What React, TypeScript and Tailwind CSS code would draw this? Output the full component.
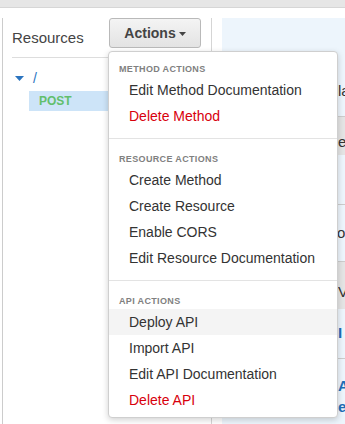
import React from 'react'

const SECTIONS = [
  {
    title: 'METHOD ACTIONS',
    items: [
      { label: 'Edit Method Documentation' },
      { label: 'Delete Method', danger: true },
    ],
  },
  {
    title: 'RESOURCE ACTIONS',
    items: [
      { label: 'Create Method' },
      { label: 'Create Resource' },
      { label: 'Enable CORS' },
      { label: 'Edit Resource Documentation' },
    ],
  },
  {
    title: 'API ACTIONS',
    items: [
      { label: 'Deploy API', active: true },
      { label: 'Import API' },
      { label: 'Edit API Documentation' },
      { label: 'Delete API', danger: true },
    ],
  },
]

function ActionsMenu() {
  return (
    <div className="absolute left-[108px] top-[51px] w-[230px] rounded-[4px] border border-[#cfcfcf] bg-white pb-[4px] pt-[9px] shadow-[0_2px_6px_rgba(0,0,0,0.18)]">
      {SECTIONS.map((section, i) => (
        <div key={section.title}>
          {i > 0 && <div className="mb-[12px] mt-[9px] h-px bg-[#e3e3e3]" />}
          <div className="h-[16px] pl-[10px] text-[9px] font-bold leading-[16px] tracking-[0.35px] text-[#808080]">
            {section.title}
          </div>
          {section.items.map((item) => (
            <div
              key={item.label}
              className={
                'h-[26px] pl-[20px] text-[14px] leading-[26px] ' +
                (item.danger ? 'text-[#d8000c] ' : 'text-[#333333] ') +
                (item.active ? 'bg-[#f4f4f4]' : '')
              }
            >
              {item.label}
            </div>
          ))}
        </div>
      ))}
    </div>
  )
}

function Sidebar() {
  return (
    <div className="w-[209px] shrink-0 border-r border-[#d5d5d5]">
      <div className="ml-[9px] mr-[10px] flex items-end justify-between border-b border-[#dddddd] pb-[9px]">
        <span className="text-[15px] leading-[20px] text-[#444444]">Resources</span>
        <button className="flex h-[30px] w-[92px] items-center justify-center gap-[3px] rounded-[3px] border border-[#b9b9b9] bg-gradient-to-b from-[#f4f4f4] to-[#e3e3e3] text-[14px] font-bold text-[#444444]">
          Actions
          <svg width="7" height="4" viewBox="0 0 7 4" className="mt-[1px]">
            <polygon points="0,0 7,0 3.5,4" fill="#444444" />
          </svg>
        </button>
      </div>
      <div className="mt-[10px] flex h-[20px] items-center pl-[12px]">
        <svg width="9" height="5" viewBox="0 0 9 5">
          <polygon points="0,0 9,0 4.5,5" fill="#2b74bf" />
        </svg>
        <span className="ml-[9px] text-[14px] text-[#2b74bf]">/</span>
      </div>
      <div className="ml-[26px] mr-[10px] mt-[3px] flex h-[20px] items-center bg-[#cde4f8] pl-[10px] text-[12px] font-bold text-[#62bf6c]">
        POST
      </div>
    </div>
  )
}

function DetailPanel() {
  return (
    <div className="ml-[10px] min-w-0 flex-1 overflow-hidden whitespace-nowrap bg-[#edf5fc] text-[15px] text-[#333333]">
      <div className="flex h-[99px] items-end border-b border-[#cccccc] pb-[14px] pl-[116px]">la</div>
      <div className="flex h-[38px] items-end bg-[#e4e4e4] pb-[2px] pl-[116px]">ea</div>
      <div className="h-[50px] border-b border-[#cccccc]" />
      <div className="flex h-[57px] items-center border-b border-[#cccccc] pl-[115px]">o|</div>
      <div className="flex h-[47px] items-end bg-[#e4e4e4] pb-[6px] pl-[116px]">VI</div>
      <div className="flex h-[50px] items-center border-b border-[#cccccc] pl-[116px] font-bold text-[#1f6fb8]">I</div>
      <div className="pl-[116px] pt-[16px] font-bold leading-[21px] text-[#1f6fb8]">
        <div>Ac</div>
        <div>e</div>
      </div>
    </div>
  )
}

export default function App() {
  return (
    <div className="relative h-[424px] w-[345px] overflow-hidden bg-white font-['Liberation_Sans',Arial,sans-serif]">
      <div className="h-[8px] border-b border-[#d6d6d6] bg-[#e6e6e6]" />
      <div className="ml-[2px] mt-[10px] flex h-[406px] border-l border-[#cccccc]">
        <Sidebar />
        <DetailPanel />
      </div>
      <ActionsMenu />
    </div>
  )
}
